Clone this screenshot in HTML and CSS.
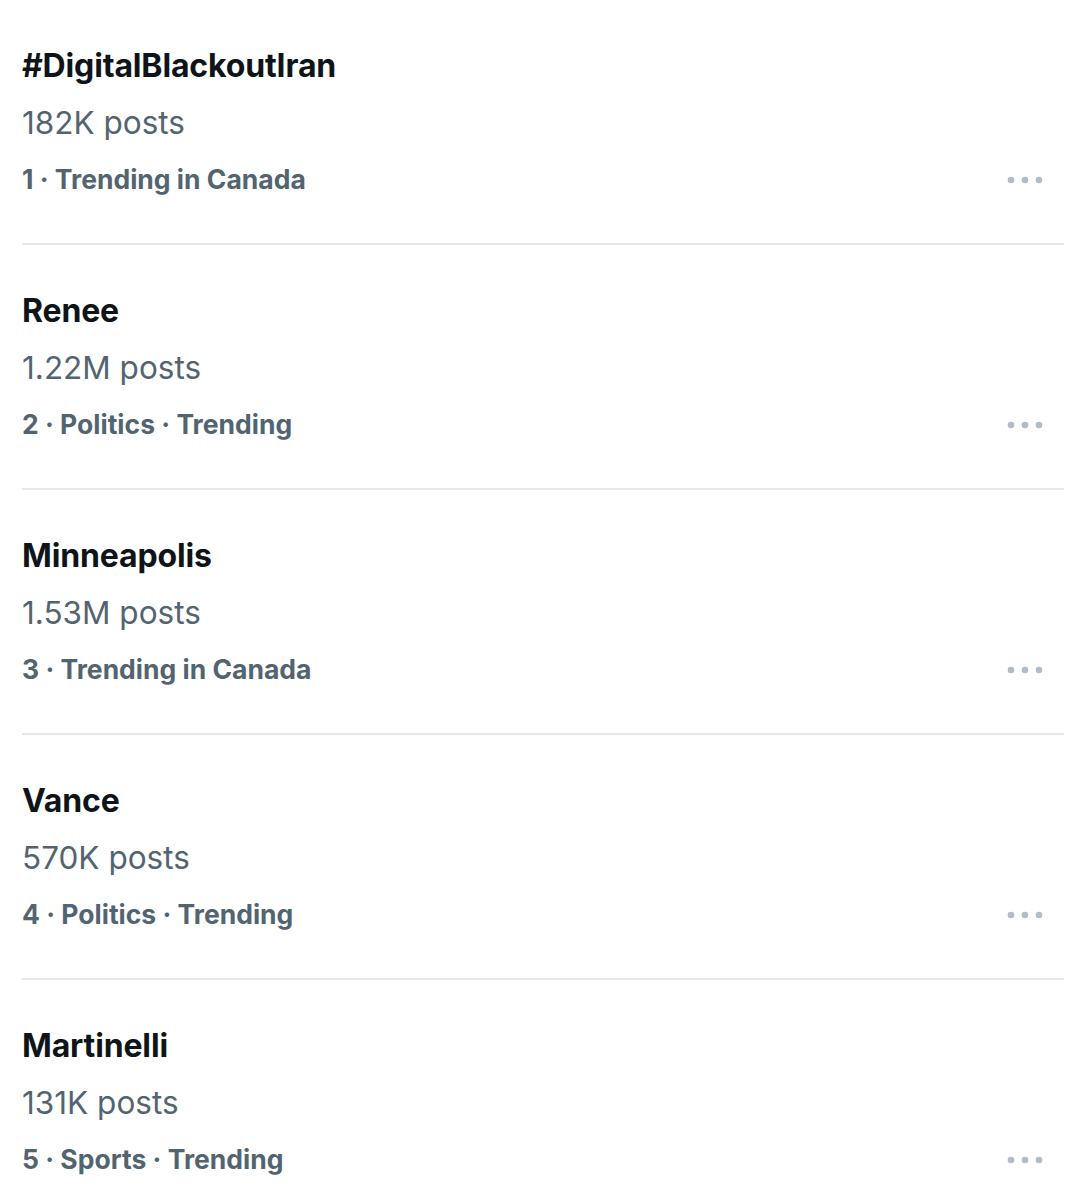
FILE: index.html
```html
<!DOCTYPE html>
<html>
<head>
<meta charset="utf-8">
<link rel="stylesheet" href="styles.css">
</head>
<body>
<main class="trends">
  <div class="trend">
    <div class="trend-text">
      <div class="title">#DigitalBlackoutIran</div>
      <div class="count">182K posts</div>
      <div class="meta">1 · Trending in Canada</div>
    </div>
    <svg class="more" width="36" height="8" viewBox="0 0 36 8"><circle cx="4" cy="4" r="3.3"/><circle cx="18" cy="4" r="3.3"/><circle cx="32" cy="4" r="3.3"/></svg>
  </div>
  <div class="trend">
    <div class="trend-text">
      <div class="title">Renee</div>
      <div class="count">1.22M posts</div>
      <div class="meta">2 · Politics · Trending</div>
    </div>
    <svg class="more" width="36" height="8" viewBox="0 0 36 8"><circle cx="4" cy="4" r="3.3"/><circle cx="18" cy="4" r="3.3"/><circle cx="32" cy="4" r="3.3"/></svg>
  </div>
  <div class="trend">
    <div class="trend-text">
      <div class="title">Minneapolis</div>
      <div class="count">1.53M posts</div>
      <div class="meta">3 · Trending in Canada</div>
    </div>
    <svg class="more" width="36" height="8" viewBox="0 0 36 8"><circle cx="4" cy="4" r="3.3"/><circle cx="18" cy="4" r="3.3"/><circle cx="32" cy="4" r="3.3"/></svg>
  </div>
  <div class="trend">
    <div class="trend-text">
      <div class="title">Vance</div>
      <div class="count">570K posts</div>
      <div class="meta">4 · Politics · Trending</div>
    </div>
    <svg class="more" width="36" height="8" viewBox="0 0 36 8"><circle cx="4" cy="4" r="3.3"/><circle cx="18" cy="4" r="3.3"/><circle cx="32" cy="4" r="3.3"/></svg>
  </div>
  <div class="trend">
    <div class="trend-text">
      <div class="title">Martinelli</div>
      <div class="count">131K posts</div>
      <div class="meta">5 · Sports · Trending</div>
    </div>
    <svg class="more" width="36" height="8" viewBox="0 0 36 8"><circle cx="4" cy="4" r="3.3"/><circle cx="18" cy="4" r="3.3"/><circle cx="32" cy="4" r="3.3"/></svg>
  </div>
</main>
</body>
</html>
```
FILE: styles.css
```css
html, body {
  margin: 0;
  padding: 0;
  background: #ffffff;
}
body {
  font-family: Inter, "Noto Sans", "Liberation Sans", sans-serif;
  -webkit-font-smoothing: antialiased;
}
.trends {
  padding: 0 22px 0 22px;
}
.trend {
  display: flex;
  align-items: flex-end;
  justify-content: space-between;
  padding: 37px 0 35px 0;
  border-bottom: 2px solid #e5e7ea;
}
.trend-text {
  display: flex;
  flex-direction: column;
}
.title {
  font-size: 32px;
  line-height: 57px;
  font-weight: 700;
  color: #0f1419;
  letter-spacing: -0.15px;
}
.count {
  font-size: 31.5px;
  line-height: 57px;
  font-weight: 400;
  color: #536471;
}
.meta {
  font-size: 26.5px;
  line-height: 57px;
  font-weight: 700;
  color: #536471;
}
.more {
  fill: #b3bcc6;
  margin: 0 21px 24px 0;
}
```
